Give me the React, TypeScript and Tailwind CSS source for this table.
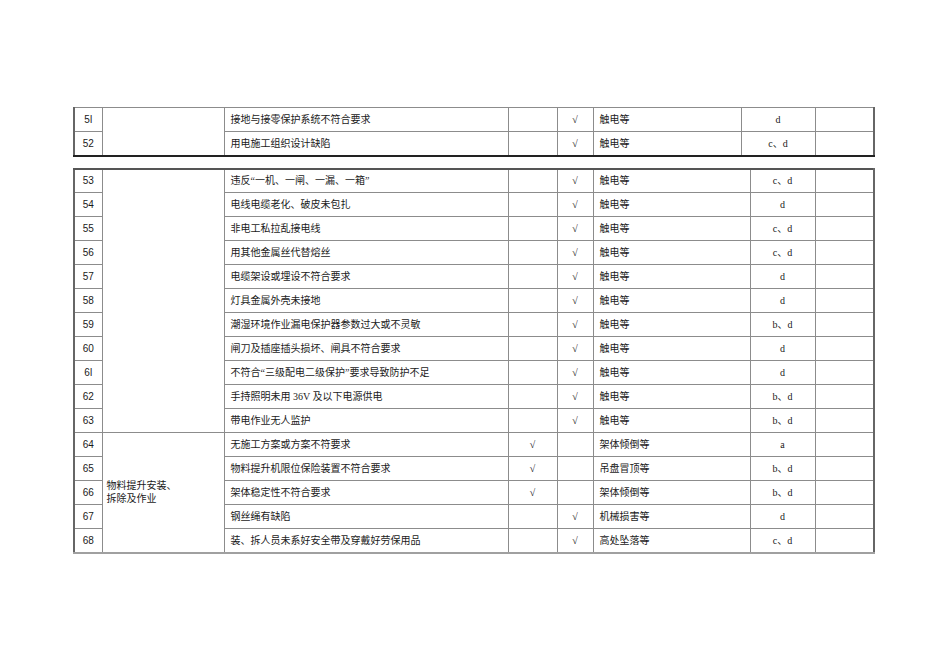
const cjk = "font-['Liberation_Serif','Noto_Sans_CJK_SC',serif]";
const num = "font-['Liberation_Sans',Arial,sans-serif]";

type Row = { no: string; item: string; a: boolean; b: boolean; harm: string; level: string };

const top: Row[] = [
  { no: "5l", item: "接地与接零保护系统不符合要求", a: false, b: true, harm: "触电等", level: "d" },
  { no: "52", item: "用电施工组织设计缺陷", a: false, b: true, harm: "触电等", level: "c、d" },
];

const elec: Row[] = [
  { no: "53", item: "违反“一机、一闸、一漏、一箱”", a: false, b: true, harm: "触电等", level: "c、d" },
  { no: "54", item: "电线电缆老化、破皮未包扎", a: false, b: true, harm: "触电等", level: "d" },
  { no: "55", item: "非电工私拉乱接电线", a: false, b: true, harm: "触电等", level: "c、d" },
  { no: "56", item: "用其他金属丝代替熔丝", a: false, b: true, harm: "触电等", level: "c、d" },
  { no: "57", item: "电缆架设或埋设不符合要求", a: false, b: true, harm: "触电等", level: "d" },
  { no: "58", item: "灯具金属外壳未接地", a: false, b: true, harm: "触电等", level: "d" },
  { no: "59", item: "潮湿环境作业漏电保护器参数过大或不灵敏", a: false, b: true, harm: "触电等", level: "b、d" },
  { no: "60", item: "闸刀及插座插头损坏、闸具不符合要求", a: false, b: true, harm: "触电等", level: "d" },
  { no: "6l", item: "不符合“三级配电二级保护”要求导致防护不足", a: false, b: true, harm: "触电等", level: "d" },
  { no: "62", item: "手持照明未用 36V 及以下电源供电", a: false, b: true, harm: "触电等", level: "b、d" },
  { no: "63", item: "带电作业无人监护", a: false, b: true, harm: "触电等", level: "b、d" },
];

const lift: Row[] = [
  { no: "64", item: "无施工方案或方案不符要求", a: true, b: false, harm: "架体倾倒等", level: "a" },
  { no: "65", item: "物料提升机限位保险装置不符合要求", a: true, b: false, harm: "吊盘冒顶等", level: "b、d" },
  { no: "66", item: "架体稳定性不符合要求", a: true, b: false, harm: "架体倾倒等", level: "b、d" },
  { no: "67", item: "钢丝绳有缺陷", a: false, b: true, harm: "机械损害等", level: "d" },
  { no: "68", item: "装、拆人员未系好安全带及穿戴好劳保用品", a: false, b: true, harm: "高处坠落等", level: "c、d" },
];

const td = "border border-[#8c8c8c] h-[24px] p-0 align-middle text-[10px] text-[#1a1a1a]";

function Cells({ r }: { r: Row }) {
  return (
    <>
      <td className={`${td} pl-[6px] ${cjk}`}>{r.item}</td>
      <td className={`${td} text-center ${cjk}`}>{r.a ? "√" : ""}</td>
      <td className={`${td} text-center ${cjk}`}>{r.b ? "√" : ""}</td>
      <td className={`${td} pl-[6px] ${cjk}`}>{r.harm}</td>
      <td className={`${td} text-center ${cjk}`}>{r.level}</td>
      <td className={td}></td>
    </>
  );
}

function NoCell({ no }: { no: string }) {
  return <td className={`${td} text-center ${num}`}>{no}</td>;
}

export default function App() {
  return (
    <div className="w-[950px] h-[672px] bg-white pt-[107px] pl-[73px]">
      <table className="table-fixed border-collapse w-[800px] border-t border-t-[#666] border-x-2 border-x-[#666] border-b-2 border-b-[#222]">
        <colgroup>
          <col className="w-[28px]" />
          <col className="w-[122px]" />
          <col className="w-[284px]" />
          <col className="w-[49px]" />
          <col className="w-[36px]" />
          <col className="w-[148px]" />
          <col className="w-[74px]" />
          <col className="w-[59px]" />
        </colgroup>
        <tbody>
          {top.map((r, i) => (
            <tr key={r.no}>
              <NoCell no={r.no} />
              {i === 0 && <td rowSpan={2} className={td}></td>}
              <Cells r={r} />
            </tr>
          ))}
        </tbody>
      </table>

      <table className="mt-[11px] table-fixed border-collapse w-[800px] border-t-2 border-t-[#555] border-x-2 border-x-[#666] border-b-2 border-b-[#a0a0a0]">
        <colgroup>
          <col className="w-[28px]" />
          <col className="w-[122px]" />
          <col className="w-[284px]" />
          <col className="w-[49px]" />
          <col className="w-[36px]" />
          <col className="w-[157px]" />
          <col className="w-[65px]" />
          <col className="w-[59px]" />
        </colgroup>
        <tbody>
          {elec.map((r, i) => (
            <tr key={r.no}>
              <NoCell no={r.no} />
              {i === 0 && <td rowSpan={elec.length} className={td}></td>}
              <Cells r={r} />
            </tr>
          ))}
          {lift.map((r, i) => (
            <tr key={r.no}>
              <NoCell no={r.no} />
              {i === 0 && (
                <td rowSpan={lift.length} className={`${td} pl-[4px] leading-[13px] ${cjk}`}>
                  物料提升安装、
                  <br />
                  拆除及作业
                </td>
              )}
              <Cells r={r} />
            </tr>
          ))}
        </tbody>
      </table>
    </div>
  );
}
